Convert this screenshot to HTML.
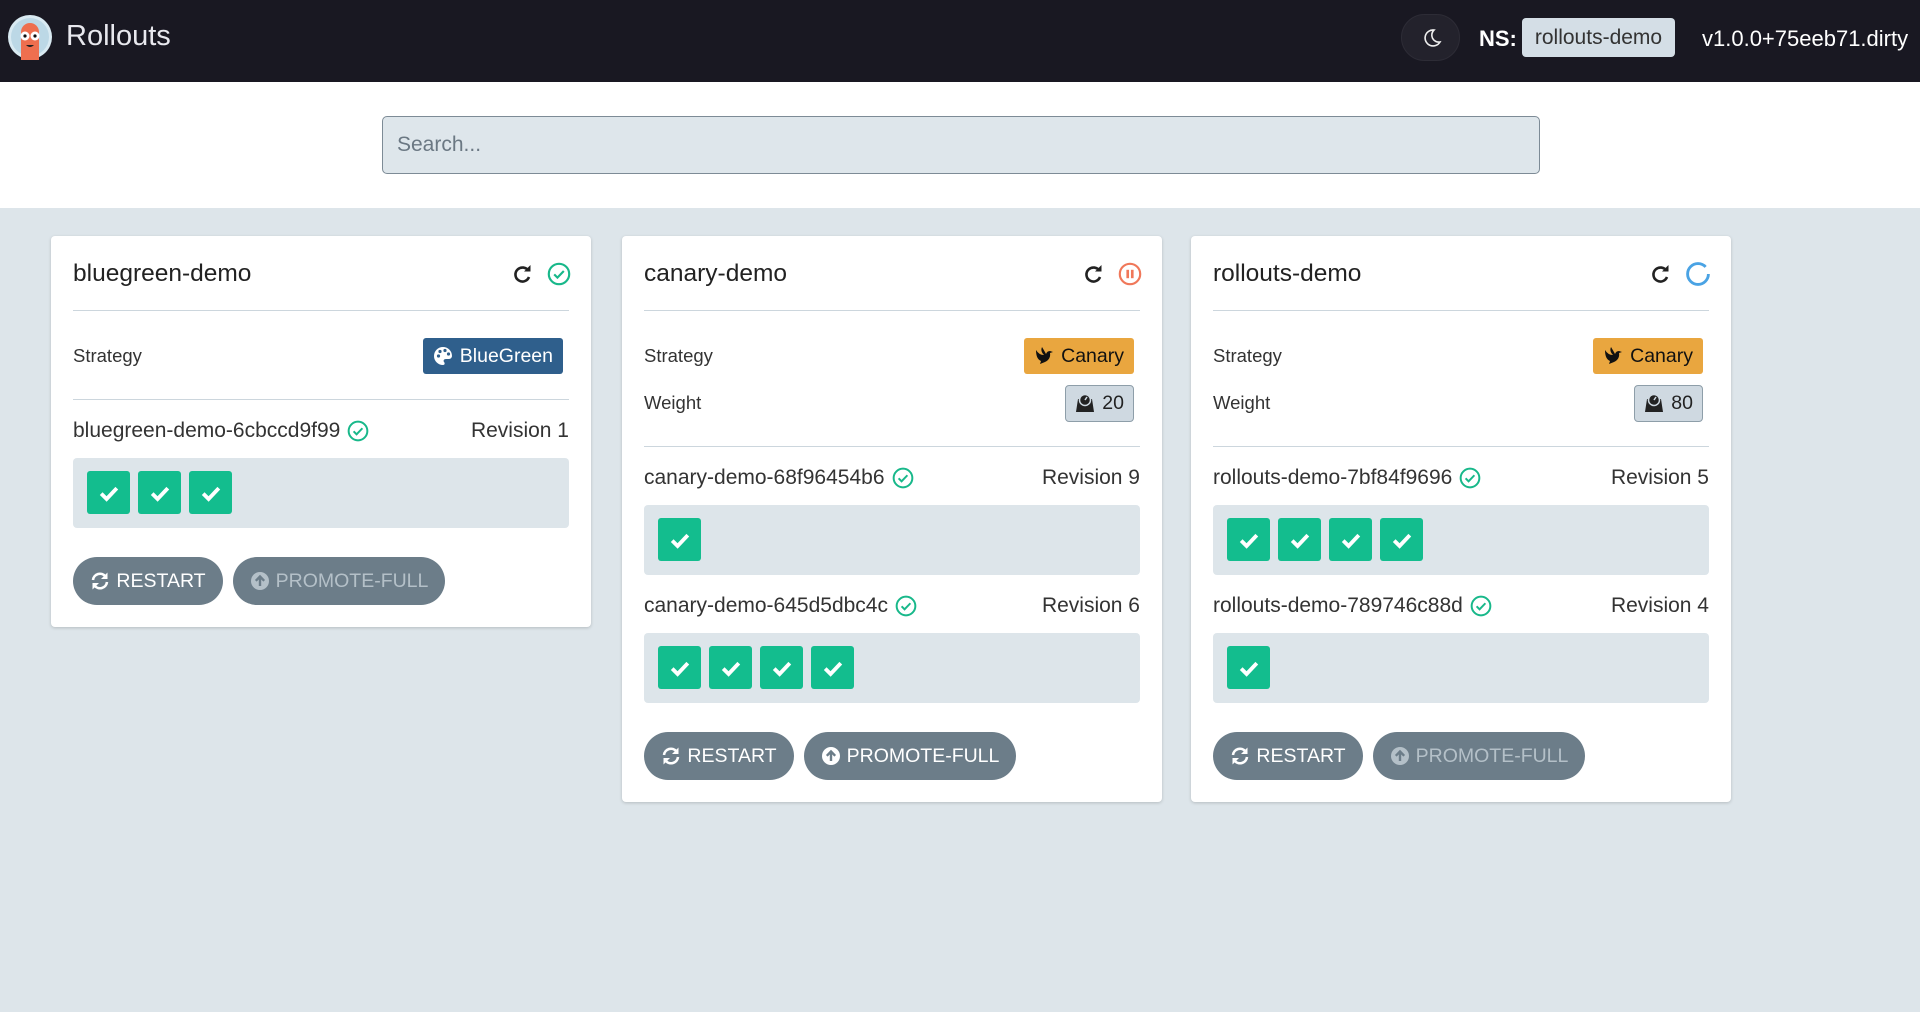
<!DOCTYPE html>
<html><head><meta charset="utf-8"><style>
*{box-sizing:border-box;margin:0;padding:0}
body{width:1920px;height:1012px;overflow:hidden;background:#dde5ea;font-family:"Liberation Sans",Arial,sans-serif;color:#222}
.hdr{position:absolute;left:0;top:0;width:1920px;height:82px;background:#191822}
.logo{position:absolute;left:8px;top:14px}
.brand{position:absolute;left:66px;top:20px;font-size:29px;color:#e8e8ee}
.moon{position:absolute;left:1401px;top:14px;width:59px;height:47px;border-radius:24px;background:#23222c;border:1px solid #2d2c36}
.ns{position:absolute;left:1479px;top:26px;font-size:22px;font-weight:bold;color:#fff}
.nsbox{position:absolute;left:1522px;top:18px;width:153px;height:39px;background:#d4dee6;border-radius:4px;font-size:21px;color:#333;line-height:40px;text-align:center}
.ver{position:absolute;left:1702px;top:26px;font-size:22px;color:#fff}
.white{position:absolute;left:0;top:82px;width:1920px;height:126px;background:#fff}
.search{position:absolute;left:382px;top:34px;width:1158px;height:58px;background:#dee6eb;border:1.5px solid #7d8b96;border-radius:5px;font-size:21px;color:#6b7883;padding-left:14px;line-height:55px}
.card{position:absolute;top:236px;width:540px;background:#fff;border-radius:4px;padding:0 22px 22px;box-shadow:0 1px 3px rgba(0,0,0,.18)}
.title{height:75px;display:flex;align-items:center;justify-content:space-between;border-bottom:1.5px solid #ccd6dd;font-size:24.5px;color:#222;padding-top:2px}
.ticons{display:flex;align-items:center;gap:14px;margin-right:-2px}
.row{height:36px;display:flex;align-items:center;justify-content:space-between;font-size:18.5px;color:#333}
.badge{height:36px;border-radius:3px;display:flex;align-items:center;padding:0 10px;font-size:19.5px;gap:7px}
.bg{background:#2f5f8c;color:#fff}
.cn{background:#e9a63f;color:#111}
.wt{height:37px;background:#cfd9e1;border:1.5px solid #8e9ea9;border-radius:4px;display:flex;align-items:center;padding:0 9px;font-size:19.5px;gap:7px;color:#222}
.div{border-top:1.5px solid #ccd6dd}
.rev{height:30px;display:flex;align-items:center;justify-content:space-between;font-size:21px;color:#333;margin-top:16px}
.rev span.n{display:flex;align-items:center;gap:7px}
.pods{height:70px;background:#dde5ea;border-radius:4px;margin-top:12px;padding:13px 14px;display:flex;gap:8px}
.pod{width:43px;height:43px;border-radius:3px;background:#13bd8e;display:flex;align-items:center;justify-content:center}
.btns{display:flex;gap:10px;margin-top:29px}
.btn{height:48px;border-radius:24px;background:#6c7d89;color:#fff;font-size:19.5px;display:flex;align-items:center;justify-content:center;gap:6px}
.dis{color:#b4c0c8}
</style></head><body>
<div class="hdr">
<svg class="logo" width="46" height="46" viewBox="0 0 46 46"><circle cx="22" cy="23" r="22" fill="#d9eaf2"/><circle cx="22" cy="23" r="19" fill="#bcd8e6"/><path d="M13 46 V18 a9 9 0 0 1 18 0 V46z" fill="#ee6f4f"/><circle cx="17" cy="22" r="4.5" fill="#fff"/><circle cx="27" cy="22" r="4.5" fill="#fff"/><circle cx="17" cy="22" r="1.6" fill="#111"/><circle cx="27" cy="22" r="1.6" fill="#111"/><path d="M18 31 q4 4 8 0z" fill="#222"/></svg>
<div class="brand">Rollouts</div>
<div class="moon"><svg style="position:absolute;left:20px;top:13px" width="20" height="20" viewBox="0 0 20 20"><path d="M12 2 a8 8 0 1 0 6 12 a7 7 0 0 1 -6 -12z" fill="none" stroke="#eee" stroke-width="1.6"/></svg></div>
<div class="ns">NS:</div>
<div class="nsbox">rollouts-demo</div>
<div class="ver">v1.0.0+75eeb71.dirty</div>
</div>
<div class="white"><div class="search">Search...</div></div>

<svg width="0" height="0" style="position:absolute">
<defs>
<symbol id="redo" viewBox="0 0 20 20"><path d="M15.5 7 A7 7 0 1 0 16 13" fill="none" stroke="#222" stroke-width="2.6"/><path d="M11 7.5 H17.5 V1z" fill="#222"/></symbol>
<symbol id="ok" viewBox="0 0 20 20"><circle cx="10" cy="10" r="8.5" fill="none" stroke="#18b88a" stroke-width="1.8"/><path d="M6 10.3 l2.7 2.7 l5.3 -5.5" fill="none" stroke="#18b88a" stroke-width="1.8"/></symbol>
<symbol id="chk" viewBox="0 0 20 20"><path d="M3.5 10.5 l4.5 4.5 l8.5 -9" fill="none" stroke="#fff" stroke-width="3.2"/></symbol>
<symbol id="sync" viewBox="0 0 20 20"><path d="M3 9 A7 7 0 0 1 15.5 5.5" fill="none" stroke="currentColor" stroke-width="2.6"/><path d="M17.5 1.5 V8 H11z" fill="currentColor"/><path d="M17 11 A7 7 0 0 1 4.5 14.5" fill="none" stroke="currentColor" stroke-width="2.6"/><path d="M2.5 18.5 V12 H9z" fill="currentColor"/></symbol>
<symbol id="up" viewBox="0 0 20 20"><circle cx="10" cy="10" r="9" fill="currentColor"/><path d="M10 15 V6 M5.8 9.8 L10 5.5 L14.2 9.8" fill="none" stroke="#6c7d89" stroke-width="2.4"/></symbol>
<symbol id="dove" viewBox="0 0 20 20"><path d="M2 4 q3 5 8 5 q-4 -4 -2 -8 q3 5 4 7 q1 -3 4 -3 l3 1 l-3 1 q1 6 -5 9 l-5 2 l1 -3 q-5 -2 -5 -11z" fill="#111"/></symbol>
<symbol id="pal" viewBox="0 0 20 20"><path d="M10 1 a9 9 0 0 0 0 18 c2 0 2 -2 1 -3 c-1 -1.5 0 -3 2 -3 h3 a3 3 0 0 0 3 -3 A9 9 0 0 0 10 1z" fill="#fff"/><circle cx="5.5" cy="10" r="1.6" fill="#2f5f8c"/><circle cx="7" cy="5.5" r="1.6" fill="#2f5f8c"/><circle cx="12" cy="4.5" r="1.6" fill="#2f5f8c"/><circle cx="15.5" cy="8" r="1.6" fill="#2f5f8c"/></symbol>
<symbol id="wgt" viewBox="0 0 20 20"><path d="M3 6 h14 l2 13 h-18z" fill="#222"/><circle cx="10" cy="7" r="5.5" fill="#222" stroke="#cfd9e1" stroke-width="1.5"/><path d="M10 7 l2 -3" stroke="#cfd9e1" stroke-width="1.5"/></symbol>
</defs></svg>

<!-- card 1 -->
<div class="card" style="left:51px">
<div class="title"><span>bluegreen-demo</span><span class="ticons"><svg width="20" height="20"><use href="#redo"/></svg><svg width="24" height="24"><use href="#ok"/></svg></span></div>
<div class="row" style="margin-top:27px"><span>Strategy</span><span class="badge bg" style="margin-right:6px"><svg width="20" height="20"><use href="#pal"/></svg>BlueGreen</span></div>
<div class="div" style="margin-top:25px"></div>
<div class="rev"><span class="n">bluegreen-demo-6cbccd9f99<svg width="22" height="22"><use href="#ok"/></svg></span><span>Revision 1</span></div>
<div class="pods"><div class="pod"><svg width="24" height="24"><use href="#chk"/></svg></div><div class="pod"><svg width="24" height="24"><use href="#chk"/></svg></div><div class="pod"><svg width="24" height="24"><use href="#chk"/></svg></div></div>
<div class="btns"><div class="btn" style="width:150px"><svg width="20" height="20" style="color:#fff"><use href="#sync"/></svg>RESTART</div><div class="btn dis" style="width:212px"><svg width="20" height="20" style="color:#b4c0c8"><use href="#up"/></svg>PROMOTE-FULL</div></div>
</div>

<!-- card 2 -->
<div class="card" style="left:622px">
<div class="title"><span>canary-demo</span><span class="ticons"><svg width="20" height="20"><use href="#redo"/></svg><svg width="24" height="24" viewBox="0 0 20 20"><circle cx="10" cy="10" r="8.5" fill="none" stroke="#f0785a" stroke-width="1.8"/><rect x="7" y="6.5" width="2.2" height="7" fill="#f0785a"/><rect x="10.8" y="6.5" width="2.2" height="7" fill="#f0785a"/></svg></span></div>
<div class="row" style="margin-top:27px"><span>Strategy</span><span class="badge cn" style="margin-right:6px"><svg width="20" height="20"><use href="#dove"/></svg>Canary</span></div>
<div class="row" style="margin-top:11px"><span>Weight</span><span class="wt" style="margin-right:6px"><svg width="20" height="20"><use href="#wgt"/></svg>20</span></div>
<div class="div" style="margin-top:25px"></div>
<div class="rev"><span class="n">canary-demo-68f96454b6<svg width="22" height="22"><use href="#ok"/></svg></span><span>Revision 9</span></div>
<div class="pods"><div class="pod"><svg width="24" height="24"><use href="#chk"/></svg></div></div>
<div class="rev"><span class="n">canary-demo-645d5dbc4c<svg width="22" height="22"><use href="#ok"/></svg></span><span>Revision 6</span></div>
<div class="pods"><div class="pod"><svg width="24" height="24"><use href="#chk"/></svg></div><div class="pod"><svg width="24" height="24"><use href="#chk"/></svg></div><div class="pod"><svg width="24" height="24"><use href="#chk"/></svg></div><div class="pod"><svg width="24" height="24"><use href="#chk"/></svg></div></div>
<div class="btns"><div class="btn" style="width:150px"><svg width="20" height="20" style="color:#fff"><use href="#sync"/></svg>RESTART</div><div class="btn" style="width:212px"><svg width="20" height="20" style="color:#fff"><use href="#up"/></svg>PROMOTE-FULL</div></div>
</div>

<!-- card 3 -->
<div class="card" style="left:1191px">
<div class="title"><span>rollouts-demo</span><span class="ticons"><svg width="20" height="20"><use href="#redo"/></svg><svg width="26" height="26" viewBox="0 0 20 20"><circle cx="10" cy="10" r="8" fill="none" stroke="#4aa3e4" stroke-width="2.2" stroke-dasharray="44 6.3"/></svg></span></div>
<div class="row" style="margin-top:27px"><span>Strategy</span><span class="badge cn" style="margin-right:6px"><svg width="20" height="20"><use href="#dove"/></svg>Canary</span></div>
<div class="row" style="margin-top:11px"><span>Weight</span><span class="wt" style="margin-right:6px"><svg width="20" height="20"><use href="#wgt"/></svg>80</span></div>
<div class="div" style="margin-top:25px"></div>
<div class="rev"><span class="n">rollouts-demo-7bf84f9696<svg width="22" height="22"><use href="#ok"/></svg></span><span>Revision 5</span></div>
<div class="pods"><div class="pod"><svg width="24" height="24"><use href="#chk"/></svg></div><div class="pod"><svg width="24" height="24"><use href="#chk"/></svg></div><div class="pod"><svg width="24" height="24"><use href="#chk"/></svg></div><div class="pod"><svg width="24" height="24"><use href="#chk"/></svg></div></div>
<div class="rev"><span class="n">rollouts-demo-789746c88d<svg width="22" height="22"><use href="#ok"/></svg></span><span>Revision 4</span></div>
<div class="pods"><div class="pod"><svg width="24" height="24"><use href="#chk"/></svg></div></div>
<div class="btns"><div class="btn" style="width:150px"><svg width="20" height="20" style="color:#fff"><use href="#sync"/></svg>RESTART</div><div class="btn dis" style="width:212px"><svg width="20" height="20" style="color:#b4c0c8"><use href="#up"/></svg>PROMOTE-FULL</div></div>
</div>
</body></html>
